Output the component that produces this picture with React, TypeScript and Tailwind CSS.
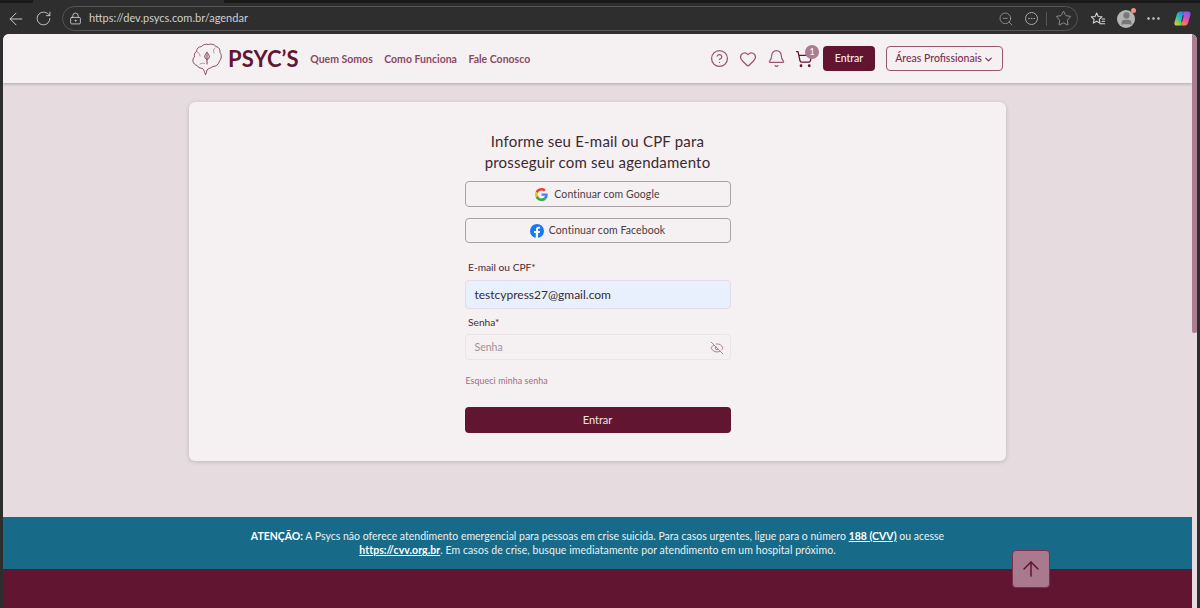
import { ArrowLeft, ArrowUp, ChevronDown, CircleHelp, EyeOff, Heart, Bell, ShoppingCart, RotateCw, LockKeyhole, ZoomOut, Ellipsis, Star, User } from "lucide-react";

const font = { fontFamily: "Lato, 'Noto Sans', sans-serif" };

function GoogleIcon() {
  return (
    <svg viewBox="0 0 48 48" className="h-[13px] w-[13px]">
      <path fill="#EA4335" d="M24 9.5c3.5 0 6.700 1.200 9.200 3.600l6.900-6.900C35.900 2.400 30.400 0 24 0 14.600 0 6.500 5.400 2.600 13.200l8 6.200C12.500 13.700 17.800 9.500 24 9.500z" />
      <path fill="#4285F4" d="M46.900 24.500c0-1.600-.1-3.100-.4-4.500H24v9h12.900c-.6 3-2.200 5.500-4.800 7.200l7.700 6c4.500-4.200 7.100-10.300 7.100-17.700z" />
      <path fill="#FBBC05" d="M10.500 28.600c-.5-1.500-.8-3-.8-4.600s.3-3.100.8-4.600l-8-6.200C.9 16.400 0 20.100 0 24s.9 7.600 2.600 10.800l7.900-6.200z" />
      <path fill="#34A853" d="M24 48c6.500 0 11.900-2.100 15.900-5.800l-7.700-6c-2.200 1.400-4.900 2.300-8.200 2.300-6.200 0-11.500-4.200-13.400-9.900l-8 6.200C6.500 42.600 14.600 48 24 48z" />
    </svg>
  );
}

function FacebookIcon() {
  return (
    <svg viewBox="0 0 24 24" className="h-[14px] w-[14px]">
      <circle cx="12" cy="12" r="12" fill="#1877F2" />
      <path fill="#fff" d="M16.700 15.500l.5-3.500h-3.300V9.800c0-1 .5-1.900 2-1.900h1.500v-3s-1.400-.2-2.700-.2c-2.700 0-4.500 1.700-4.500 4.600V12H6.900v3.500h3v8.400c.6.100 1.200.1 1.900.1s1.400 0 2.100-.1v-8.400h2.800z" />
    </svg>
  );
}

function BrainLogo() {
  return (
    <svg viewBox="0 0 30 32" className="h-[32px] w-[30px] shrink-0" fill="none" stroke="#7d3a55" strokeWidth="0.9" strokeLinecap="round" strokeLinejoin="round">
      <path d="M13.500 31.500C12.500 29 12 27 10.500 25.500C8 25 6 24.500 5 22.500C3 22 1.500 20.500 1 18.500C.5 16.500 1.500 15 2.500 14C2 12 2.500 9.500 4.500 8.500C4.500 5.500 7 3.500 9.500 3.500C11 1.500 14 .8 16.500 1.500C19 .5 22.500 1.500 24 3.500C27 4 28.500 7 28 9.500C30 12 29.500 16 27.500 18C27 21 24 23.500 21 23.500C19 25 16 25.500 15 27C14.500 28.500 14.800 30.500 13.500 31.500Z" />
      <path d="M15 9.500C13.500 11 12.500 12.500 12.800 14C13.200 15.500 14.500 16.500 15 16.500C15.800 16.500 17.200 15.400 17.300 14C17.400 12.500 16.300 11 15 9.500ZM15 11V21" strokeWidth="1" />
      <path d="M5 9c2 .5 3 2 3 4M23 5c-1.500 1-2 3-1 5M8 21c1.500-1 3-1 4.500-.5" strokeWidth="0.5" />
    </svg>
  );
}

function FavoritesIcon() {
  return (
    <svg viewBox="0 0 24 24" className="ml-[12px] h-[16px] w-[16px]" fill="none" stroke="currentColor" strokeWidth="1.6" strokeLinecap="round" strokeLinejoin="round">
      <path d="M10 3l2.300 5.200 5.700.6-4.200 3.800 1.200 5.600-5-2.900-5 2.900 1.200-5.600L2 8.800l5.700-.6z" />
      <path d="M18 12h4M18 15.500h4M15 19h7" />
    </svg>
  );
}

function CopilotIcon() {
  return (
    <svg viewBox="0 0 24 24" className="ml-[12px] h-[17px] w-[17px]">
      <defs>
        <linearGradient id="copilotLeft" x1="0.8" y1="0" x2="0.2" y2="1">
          <stop offset="0" stopColor="#2f7bf0" />
          <stop offset="0.55" stopColor="#35c6a0" />
          <stop offset="1" stopColor="#f5c518" />
        </linearGradient>
        <linearGradient id="copilotRight" x1="0.7" y1="0" x2="0.3" y2="1">
          <stop offset="0" stopColor="#7a5cf0" />
          <stop offset="0.55" stopColor="#e04fb0" />
          <stop offset="1" stopColor="#f58a3c" />
        </linearGradient>
      </defs>
      <path fill="url(#copilotLeft)" d="M9 2h5L10 22H4c-2.500 0-4-2-3.300-4.500L4 6c.7-2.500 2.500-4 5-4z" />
      <path fill="url(#copilotRight)" d="M15 22h-5L14 2h6c2.500 0 4 2 3.300 4.500L20 18c-.7 2.500-2.500 4-5 4z" />
      <path d="M13 8l-2 8" stroke="#2e2e2e" strokeWidth="1.5" strokeLinecap="round" />
    </svg>
  );
}

export default function App() {
  return (
    <div className="flex h-[608px] w-[1200px] flex-col overflow-hidden bg-[#2e2e2e]" style={font}>
      {/* browser toolbar */}
      <div className="flex h-[3px] shrink-0">
        <div className="w-[33px] bg-[#1a1a1a]" />
        <div className="w-[191px]" />
        <div className="flex-1 bg-[#1a1a1a]" />
      </div>
      <div className="flex h-[31px] shrink-0 items-center text-[#d6d6d6]">
        <ArrowLeft className="ml-[6px] h-[20px] w-[20px]" strokeWidth={1.1} />
        <RotateCw className="ml-[9px] h-[17px] w-[17px]" strokeWidth={1.2} />
        <div className="ml-[10px] flex h-[25px] w-[1016px] items-center rounded-full border border-[#555] pl-[6px] pr-[5px]">
          <LockKeyhole className="h-[13px] w-[13px]" strokeWidth={1.5} />
          <span className="ml-[7px] text-[11px] text-[#cfcfcf]">https://dev.psycs.com.br/agendar</span>
          <div className="ml-auto flex items-center text-[#a8a8a8]">
            <ZoomOut className="h-[16px] w-[16px]" strokeWidth={1.1} />
            <div className="ml-[11px] flex h-[13px] w-[13px] items-center justify-center rounded-full border border-[#a8a8a8]">
              <Ellipsis className="h-[9px] w-[9px]" />
            </div>
            <div className="ml-[8px] h-[14px] w-px bg-[#555]" />
            <Star className="ml-[8px] h-[17px] w-[17px]" strokeWidth={1.1} />
          </div>
        </div>
        <FavoritesIcon />
        <div className="relative ml-[11px] h-[18px] w-[18px]">
          <div className="flex h-[18px] w-[18px] items-center justify-center overflow-hidden rounded-full bg-[#b5b5b5]">
            <User className="h-[15px] w-[15px] fill-[#777] text-[#777]" />
          </div>
          <span className="absolute -right-[1px] -top-[2px] h-[5px] w-[5px] rounded-full bg-[#f0908a]" />
        </div>
        <Ellipsis className="ml-[10px] h-[17px] w-[17px]" strokeWidth={1.5} />
        <CopilotIcon />
      </div>

      <div className="flex min-h-0 flex-1 px-[3px]">
        <div className="flex min-w-0 flex-1 overflow-hidden rounded-t-[6px] bg-[#e6dcdf]">
          <div className="flex min-w-0 flex-1 flex-col">
            {/* header */}
            <div className="flex h-[49px] shrink-0 items-center bg-[#f5f0f2] pl-[189px] pr-[189px] shadow-[0_1px_3px_rgba(0,0,0,0.25)]">
              <BrainLogo />
              <span className="ml-[6px] text-[22px] font-bold leading-none tracking-[0.1px] text-[#611531]">PSYC’S</span>
              <nav className="ml-[11.5px] flex gap-[11.5px] pt-[2px] text-[10.5px] font-bold text-[#8b4a65]">
                <span>Quem Somos</span>
                <span>Como Funciona</span>
                <span>Fale Conosco</span>
              </nav>
              <div className="ml-auto flex items-center text-[#9a5570]">
                <CircleHelp className="h-[19px] w-[19px]" strokeWidth={1.6} />
                <Heart className="ml-[9.5px] h-[18px] w-[18px]" strokeWidth={1.7} />
                <Bell className="ml-[10px] h-[19px] w-[19px]" strokeWidth={1.5} />
                <div className="relative ml-[9.5px]">
                  <ShoppingCart className="h-[18px] w-[18px] text-[#611531]" strokeWidth={1.7} />
                  <span className="absolute -right-[6px] -top-[5px] flex h-[14px] w-[14px] items-center justify-center rounded-full bg-[#aa7d90] text-[9px] text-white">1</span>
                </div>
                <button className="ml-[10px] h-[25px] w-[52px] rounded-[4px] bg-[#611531] pt-px text-[10.5px] font-medium text-[#f5f0f2]">Entrar</button>
                <button className="ml-[11px] flex h-[25px] w-[117px] items-center justify-center gap-[1px] rounded-[4px] border border-[#9a5570] pt-px text-[10.5px] font-medium text-[#7d2f4d]">
                  Áreas Profissionais
                  <ChevronDown className="h-[11px] w-[11px]" strokeWidth={2.6} />
                </button>
              </div>
            </div>

            {/* login card */}
            <div className="flex-1 pl-[186px] pt-[19px]">
              <div className="flex h-[359px] w-[817px] flex-col items-center rounded-[6px] bg-[#f5f0f2] pt-[29px] shadow-[0_1px_4px_rgba(0,0,0,0.18)]">
                <h1 className="text-center text-[15px] font-normal leading-[21px] tracking-[0.2px] text-[#3a2a30]">
                  Informe seu E-mail ou CPF para
                  <br />
                  prosseguir com seu agendamento
                </h1>
                <div className="mt-[8px] w-[266px]">
                  <button className="flex h-[26px] w-full items-center justify-center gap-[6px] rounded-[4px] border border-[#aaa3a6] pt-px text-[10.5px] tracking-[0.1px] text-[#4a3c42]">
                    <GoogleIcon />
                    Continuar com Google
                  </button>
                  <button className="mt-[11px] flex h-[25px] w-full items-center justify-center gap-[5px] rounded-[4px] border border-[#aaa3a6] pt-px text-[10.5px] tracking-[0.1px] text-[#4a3c42]">
                    <FacebookIcon />
                    Continuar com Facebook
                  </button>
                  <label className="ml-[3.5px] mt-[17px] block text-[10.2px] leading-[14px] text-[#4a2a36]">E-mail ou CPF*</label>
                  <div className="mt-[6px] flex h-[29px] items-center rounded-[4px] border border-[#e3dbe6] bg-[#e8f0fe] pl-[9px] text-[12px] text-[#3a2a30]">testcypress27@gmail.com</div>
                  <label className="ml-[3.5px] mt-[6px] block text-[10.2px] leading-[14px] text-[#4a2a36]">Senha*</label>
                  <div className="mt-[5px] flex h-[26px] items-center justify-between rounded-[4px] border border-[#ebe4e7] pl-[9px] pr-[6px] pt-px text-[10.5px] text-[#9c9297]">
                    Senha
                    <EyeOff className="h-[14px] w-[14px] text-[#a97a8d]" strokeWidth={1.6} />
                  </div>
                  <a className="mt-[14px] block pl-px pt-px text-[8.8px] leading-[12px] tracking-[0.1px] text-[#a06a82]">Esqueci minha senha</a>
                  <button className="mt-[20px] h-[26px] w-full rounded-[4px] bg-[#611531] text-[11px] font-normal text-[#efe6e9]">Entrar</button>
                </div>
              </div>
            </div>

            {/* aviso */}
            <div className="relative shrink-0">
              <div className="flex h-[52px] flex-col items-center justify-center bg-[#176b88] text-[10.5px] leading-[14px] text-[#e9f0f3]">
                <p>
                  <strong className="text-white">ATENÇÃO:</strong> A Psycs não oferece atendimento emergencial para pessoas em crise suicida. Para casos urgentes, ligue para o número <strong className="text-white underline">188 (CVV)</strong> ou acesse
                </p>
                <p className="tracking-[0.06px]">
                  <strong className="text-white underline">https://cvv.org.br</strong>. Em casos de crise, busque imediatamente por atendimento em um hospital próximo.
                </p>
              </div>
              <div className="h-[39px] bg-[#611531]" />
              <button className="absolute left-[1009px] top-[33px] flex h-[38px] w-[38px] items-center justify-center rounded-[4px] border border-[#7d2f4d] bg-[#a97a8d]">
                <ArrowUp className="h-[24px] w-[24px] text-[#611531]" strokeWidth={1.5} />
              </button>
            </div>
          </div>
          {/* scrollbar */}
          <div className="w-[5px] shrink-0">
            <div className="h-[299px] w-[5px] rounded-b-[2px] bg-[#aa7d90]" />
          </div>
        </div>
      </div>
    </div>
  );
}
